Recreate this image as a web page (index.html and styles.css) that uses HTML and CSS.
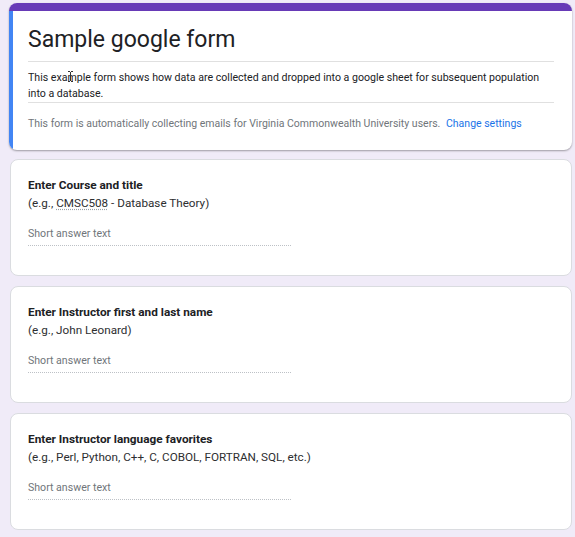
FILE: index.html
```html
<!DOCTYPE html>
<html>
<head>
<meta charset="utf-8">
<link rel="stylesheet" href="styles.css">
</head>
<body>
<div class="page">
  <div class="card header-card">
    <div class="top-bar"></div>
    <div class="header-row">
      <div class="side-bar"></div>
      <div class="header-content">
        <h1 class="form-title">Sample google form</h1>
        <p class="form-desc">This example form shows how data are collected and dropped into a google sheet for subsequent population into a database.</p>
        <p class="form-note">This form is automatically collecting emails for Virginia Commonwealth University users. <span class="link">Change settings</span></p>
        <svg class="ibeam" width="7" height="11" viewBox="0 0 7 11"><path d="M1 0.5h2M4 0.5h2M1 10.5h2M4 10.5h2M3.5 1v9" stroke="#333" stroke-width="1" fill="none"/></svg>
      </div>
    </div>
  </div>

  <div class="card q-card">
    <div class="q-title">Enter Course and title</div>
    <div class="q-sub">(e.g., <span class="spell">CMSC508</span> - Database Theory)</div>
    <div class="q-answer">Short answer text</div>
  </div>

  <div class="card q-card">
    <div class="q-title">Enter Instructor first and last name</div>
    <div class="q-sub">(e.g., John Leonard)</div>
    <div class="q-answer">Short answer text</div>
  </div>

  <div class="card q-card">
    <div class="q-title">Enter Instructor language favorites</div>
    <div class="q-sub">(e.g., Perl, Python, C++, C, COBOL, FORTRAN, SQL, etc.)</div>
    <div class="q-answer">Short answer text</div>
  </div>
</div>
</body>
</html>
```

FILE: styles.css
```css
* { box-sizing: border-box; }
html, body {
  margin: 0;
  padding: 0;
  background: #f0ebf8;
  font-family: Roboto, "Liberation Sans", Arial, sans-serif;
  color: #202124;
}
.page {
  display: flex;
  flex-direction: column;
  gap: 10px;
  padding: 3px 3px 0 10px;
}
.card {
  background: #fff;
  border-radius: 8px;
  border: 1px solid #dadce0;
}
.header-card {
  margin-left: -1px;
  margin-bottom: -1px;
  height: 147px;
  overflow: hidden;
  border: none;
  box-shadow: 0 1px 2px rgba(0,0,0,0.35);
}
.top-bar {
  height: 8px;
  background: #673ab7;
}
.header-row {
  display: flex;
  height: 139px;
}
.side-bar {
  width: 4px;
  background: #4285f4;
  flex: none;
}
.header-content {
  position: relative;
  flex: 1;
  padding: 15px 18px 0 15px;
}
.form-title {
  margin: 0;
  font-weight: 400;
  font-size: 23px;
  line-height: 28px;
  padding-bottom: 7px;
  border-bottom: 1px solid #e0e0e0;
}
.form-desc {
  margin: 0;
  font-size: 10.6px;
  line-height: 16px;
  padding: 8px 0 0;
  border-bottom: 1px solid #e0e0e0;
}
.form-note {
  margin: 0;
  padding-top: 13px;
  font-size: 10.5px;
  line-height: 16px;
  color: #70757a;
}
.link { color: #1a73e8; margin-left: 3px; }
.ibeam {
  position: absolute;
  left: 54px;
  top: 60px;
}
.q-card {
  height: 117px;
  padding: 17px 17px 0 17px;
}
.q-title {
  font-size: 11.8px;
  font-weight: 700;
  line-height: 16px;
}
.q-sub {
  margin-top: 1px;
  font-size: 11.7px;
  line-height: 18px;
  color: #2d2e30;
}
.spell {
  text-decoration: underline dotted #9aa0a6;
  text-underline-offset: 2px;
}
.q-answer {
  margin-top: 14px;
  width: 263px;
  font-size: 10.6px;
  line-height: 16px;
  color: #70757a;
  padding-bottom: 3px;
  border-bottom: 1px dotted #bdc1c6;
}
```
